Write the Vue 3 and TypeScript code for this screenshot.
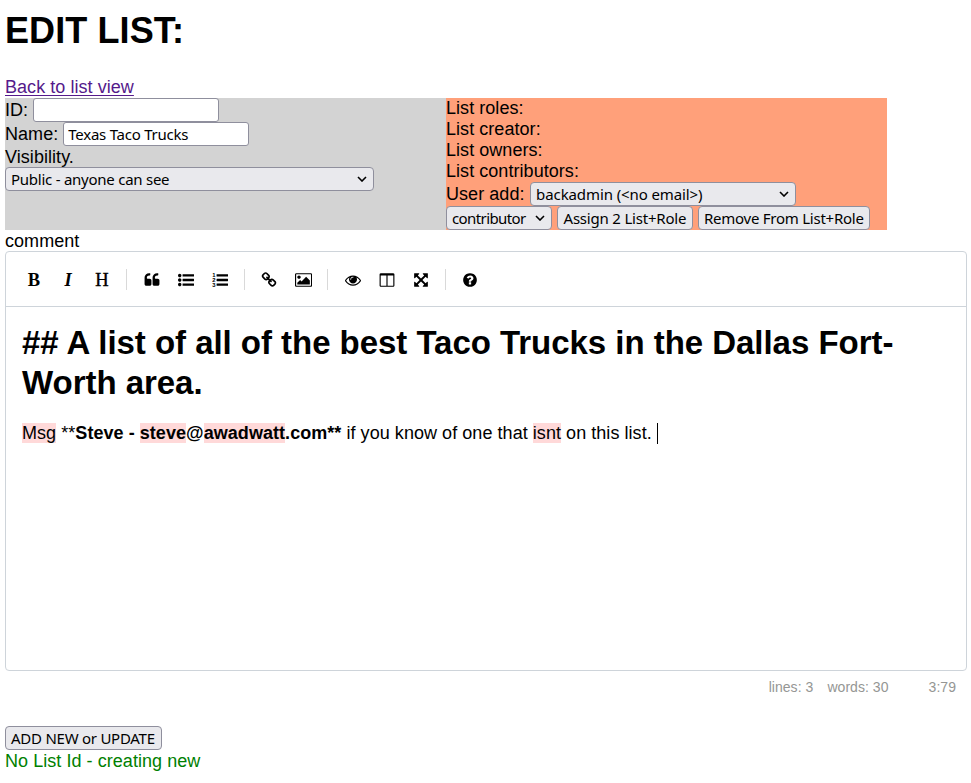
<script setup lang="ts">
import { ref } from 'vue'

interface Tool {
  name: string
  letter?: string
  box?: string
  width?: number
  path?: string
}

const bar = 'q0-13 9.5-22.5t22.5-9.5h1216q13 0 22.5 9.5t9.5 22.5v192q0 13-9.5 22.5t-22.5 9.5h-1216q-13 0-22.5-9.5t-9.5-22.5z'
const bars = `M512 288${bar}M512 800${bar}M512 1312${bar}`
const dot = 'q0 80-56 136t-136 56-136-56-56-136 56-136 136-56 136 56 56 136z'
const quote = 'v384q0 80-56 136t-136 56h-384q-80 0-136-56t-56-136v-704q0-104 40.5-198.5t109.5-163.5 163.5-109.5 198.5-40.5h64q26 0 45 19t19 45v128q0 26-19 45t-45 19h-64q-106 0-181 75t-75 181v32q0 40 28 68t68 28h224q80 0 136 56t56 136z'

const groups: Tool[][] = [
  [
    { name: 'bold', letter: 'B' },
    { name: 'italic', letter: 'I' },
    { name: 'header', letter: 'H' },
  ],
  [
    { name: 'quote', path: `M832 960${quote}M1728 960${quote}` },
    { name: 'unordered-list', path: `M384 1408${dot}M384 896${dot}M384 384${dot}${bars}` },
    { name: 'ordered-list', path: bars },
  ],
  [
    { name: 'link', path: 'M1520 1216q0-40-28-68l-208-208q-28-28-68-28-42 0-72 32 3 3 19 18.5t21.5 21.5 15 19 13 25.5 3.5 27.5q0 40-28 68t-68 28q-15 0-27.5-3.5t-25.5-13-19-15-21.5-21.5-18.5-19q-33 31-33 73 0 40 28 68l206 207q27 27 68 27 40 0 68-26l147-146q28-28 28-67zm-703-705q0-40-28-68l-206-207q-28-28-68-28-39 0-68 27l-147 146q-28 28-28 67 0 40 28 68l208 208q27 27 68 27 42 0 72-31-3-3-19-18.5t-21.5-21.5-15-19-13-25.5-3.5-27.5q0-40 28-68t68-28q15 0 27.5 3.5t25.5 13 19 15 21.5 21.5 18.5 19q33-31 33-73zm895 705q0 120-85 203l-147 146q-83 83-203 83-121 0-204-85l-206-207q-83-83-83-203 0-123 88-209l-88-88q-86 88-208 88-120 0-204-84l-208-208q-84-84-84-204t85-203l147-146q83-83 203-83 121 0 204 85l206 207q83 83 83 203 0 123-88 209l88 88q86-88 208-88 120 0 204 84l208 208q84 84 84 204z' },
    { name: 'image', box: '-64 0 1920 1792', width: 17.14, path: 'M576 576q0 80-56 136t-136 56-136-56-56-136 56-136 136-56 136 56 56 136zm1024 384v448h-1408v-192l320-320 160 160 512-512zm96-704h-1600q-13 0-22.5 9.5t-9.5 22.5v1216q0 13 9.5 22.5t22.5 9.5h1600q13 0 22.5-9.5t9.5-22.5v-1216q0-13-9.5-22.5t-22.5-9.5zm160 32v1216q0 66-47 113t-113 47h-1600q-66 0-113-47t-47-113v-1216q0-66 47-113t113-47h1600q66 0 113 47t47 113z' },
  ],
  [
    { name: 'preview', path: 'M1664 960q-152-236-381-353 61 104 61 225 0 185-131.5 316.5t-316.5 131.5-316.5-131.5-131.5-316.5q0-121 61-225-229 117-381 353 133 205 333.5 326.5t434.5 121.5 434.5-121.5 333.5-326.5zm-720-384q0-20-14-34t-34-14q-125 0-214.5 89.5t-89.5 214.5q0 20 14 34t34 14 34-14 14-34q0-86 61-147t147-61q20 0 34-14t14-34zm848 384q0 34-20 69-140 230-376.5 368.5t-499.5 138.5-499.5-139-376.5-368q-20-35-20-69t20-69q140-229 376.5-368t499.5-139 499.5 139 376.5 368q20 35 20 69z' },
    { name: 'side-by-side', path: 'M224 1536h608v-1152h-640v1120q0 13 9.5 22.5t22.5 9.5zM1600 1504v-1120h-640v1152h608q13 0 22.5-9.5t9.5-22.5zM1728 288v1216q0 66-47 113t-113 47h-1344q-66 0-113-47t-47-113v-1216q0-66 47-113t113-47h1344q66 0 113 47t47 113z' },
    { name: 'fullscreen', path: 'M1411 541l-355 355 355 355 144-144q29-31 70-14 39 17 39 59v448q0 26-19 45t-45 19h-448q-42 0-59-40-17-39 14-69l144-144-355-355-355 355 144 144q31 30 14 69-17 40-59 40h-448q-26 0-45-19t-19-45v-448q0-42 40-59 39-17 69 14l144 144 355-355-355-355-144 144q-19 19-45 19-12 0-24-5-40-17-40-59v-448q0-26 19-45t45-19h448q42 0 59 40 17 39-14 69l-144 144 355 355 355-355-144-144q-31-30-14-69 17-40 59-40h448q26 0 45 19t19 45v448q0 42-39 59-13 5-25 5-26 0-45-19z' },
  ],
  [
    { name: 'guide', path: 'M1024 1376v-192q0-14-9-23t-23-9h-192q-14 0-23 9t-9 23v192q0 14 9 23t23 9h192q14 0 23-9t9-23zm256-672q0-88-55.5-163t-138.5-116-170-41q-243 0-371 213-15 24 8 42l132 100q7 6 19 6 16 0 25-12 53-68 86-92 34-24 86-24 48 0 85.5 26t37.5 59q0 38-20 61t-68 45q-63 28-115.5 86.5t-52.5 125.5v36q0 14 9 23t23 9h192q14 0 23-9t9-23q0-19 21.5-49.5t54.5-49.5q32-18 49-28.5t46-35 44.5-48 28-60.5 12.5-81zm384 192q0 209-103 385.5t-279.5 279.5-385.5 103-385.5-103-279.5-279.5-103-385.5 103-385.5 279.5-279.5 385.5-103 385.5 103 279.5 279.5 103 385.5z' },
  ],
]

const listId = ref('')
const listName = ref('Texas Taco Trucks')
</script>

<template>
  <main class="page">
    <h1 class="title">EDIT LIST:</h1>
    <a class="back" href="#">Back to list view</a>

    <div class="panels">
      <section class="panel details">
        <label class="field">ID: <input v-model="listId" class="control input" type="text" /></label>
        <label class="field">Name: <input v-model="listName" class="control input" type="text" /></label>
        <div class="line low">Visibility.</div>
        <button class="control select visibility" type="button">
          <span>Public - anyone can see</span>
          <svg class="chevron" viewBox="0 0 10 6"><path d="M1 1l4 4 4-4" /></svg>
        </button>
      </section>
      <section class="panel roles">
        <div class="line">List roles:</div>
        <div class="line">List creator:</div>
        <div class="line">List owners:</div>
        <div class="line">List contributors:</div>
        <div class="field user">
          User add:
          <button class="control select account" type="button">
            <span>backadmin (&lt;no email&gt;)</span>
            <svg class="chevron" viewBox="0 0 10 6"><path d="M1 1l4 4 4-4" /></svg>
          </button>
        </div>
        <div class="actions">
          <button class="control select role" type="button">
            <span>contributor</span>
            <svg class="chevron" viewBox="0 0 10 6"><path d="M1 1l4 4 4-4" /></svg>
          </button>
          <button class="control assign" type="button"><span>Assign 2 List+Role</span></button>
          <button class="control remove" type="button"><span>Remove From List+Role</span></button>
        </div>
      </section>
    </div>

    <div class="line low">comment</div>
    <div class="editor">
      <div class="toolbar">
        <template v-for="(group, g) in groups" :key="g">
          <i v-if="g > 0" class="separator"></i>
          <button v-for="tool in group" :key="tool.name" class="tool" :class="tool.name" type="button">
            <span v-if="tool.letter">{{ tool.letter }}</span>
            <svg v-else :viewBox="tool.box ?? '0 0 1792 1792'" :width="tool.width ?? 16" height="16">
              <path fill-rule="evenodd" :d="tool.path" />
              <g v-if="tool.name === 'ordered-list'" class="digits">
                <text x="20" y="560">1</text>
                <text x="20" y="1130">2</text>
                <text x="20" y="1700">3</text>
              </g>
            </svg>
          </button>
        </template>
      </div>
      <div class="content">
        <div class="heading">## A list of all of the best Taco Trucks in the Dallas Fort-Worth area.</div>
        <p class="message"><mark>Msg</mark> **<b>Steve - <mark>steve</mark>@<mark>awadwatt</mark>.com**</b> if you know of one that <mark>isnt</mark> on this list. <i class="caret"></i></p>
      </div>
    </div>
    <div class="status"><span>lines: 3</span><span>words: 30</span><span class="cursor">3:79</span></div>

    <button class="control submit" type="button"><span>ADD NEW or UPDATE</span></button>
    <div class="line low notice">No List Id - creating new</div>
  </main>
</template>

<style>
body {
  background: #fff;
}
</style>

<style scoped>
* {
  box-sizing: border-box;
}
.page {
  display: flex;
  flex-direction: column;
  align-items: flex-start;
  padding: 10px 4px 0 5px;
  font: 18px/21px "Liberation Sans", Arial, sans-serif;
  letter-spacing: 0.05px;
  color: #000;
}
.title {
  margin: 0 0 26px;
  font-size: 36px;
  line-height: 41px;
  letter-spacing: 0.1px;
}
.back {
  color: #551a8b;
  text-decoration: underline;
  text-decoration-thickness: 1px;
  text-underline-offset: 2px;
}
.panels {
  display: flex;
  height: 132px;
}
.panel {
  width: 441px;
}
.details {
  background: #d3d3d3;
}
.roles {
  background: #ffa07a;
}
.line {
  height: 21px;
}
.low {
  line-height: 23px;
}
.field {
  display: flex;
  align-items: center;
  gap: 5px;
  height: 24px;
}
.control {
  display: flex;
  align-items: center;
  height: 24px;
  padding: 0 5px;
  border: 1px solid #8f8f9d;
  border-radius: 4px;
  background: #e9e9ed;
  color: #000;
  font: 15px/20px "Noto Sans", sans-serif;
  letter-spacing: -0.25px;
  white-space: nowrap;
}
.input {
  width: 186px;
  padding: 0 4px;
  border-radius: 3px;
  background: #fff;
  outline: none;
}
.select {
  justify-content: space-between;
  padding-right: 6px;
}
.chevron {
  width: 10px;
  height: 6px;
  fill: none;
  stroke: #000;
  stroke-width: 1.6;
}
.visibility {
  width: 369px;
}
.user {
  gap: 5.6px;
}
.account {
  width: 266px;
  letter-spacing: -0.1px;
}
.actions {
  display: flex;
  gap: 5px;
}
.role {
  width: 106px;
  letter-spacing: -0.6px;
}
.assign {
  width: 136px;
  padding-left: 5.5px;
  letter-spacing: -0.2px;
}
.remove {
  width: 172px;
}
.editor {
  width: 962px;
  height: 420px;
  border: 1px solid #ced4da;
  border-radius: 4px;
}
.toolbar {
  display: flex;
  align-items: center;
  gap: 4px;
  height: 55px;
  padding: 1px 13px 0;
  border-bottom: 1px solid #ced4da;
}
.tool {
  display: flex;
  flex: none;
  align-items: center;
  justify-content: center;
  width: 30px;
  height: 30px;
  padding: 0;
  border: 0;
  background: none;
  color: #000;
  font: 18.5px/20px "Liberation Serif", serif;
}
.bold {
  font-weight: bold;
}
.italic {
  font-style: italic;
  font-weight: bold;
}
.header {
  -webkit-text-stroke: 0.4px #000;
}
.digits {
  font: bold 660px "Liberation Sans", sans-serif;
}
.separator {
  width: 1px;
  height: 21px;
  margin: 0 5.3px;
  background: #d9d9d9;
}
.content {
  padding: 16px;
}
.heading {
  font-size: 33px;
  font-weight: bold;
  line-height: 40px;
  letter-spacing: -0.035px;
}
.message {
  display: flow-root;
  margin: 20px 0 0;
}
mark {
  background: #ffd9d9;
  color: inherit;
}
.caret {
  display: inline-block;
  width: 1px;
  height: 21px;
  vertical-align: top;
  background: #000;
}
.status {
  display: flex;
  align-self: flex-end;
  gap: 14px;
  height: 55px;
  padding: 8px 11px 0 0;
  font-size: 14px;
  line-height: 17px;
  color: #959694;
}
.cursor {
  margin-left: 26px;
}
.submit {
  width: 157px;
}
.notice {
  color: #008000;
}
</style>
